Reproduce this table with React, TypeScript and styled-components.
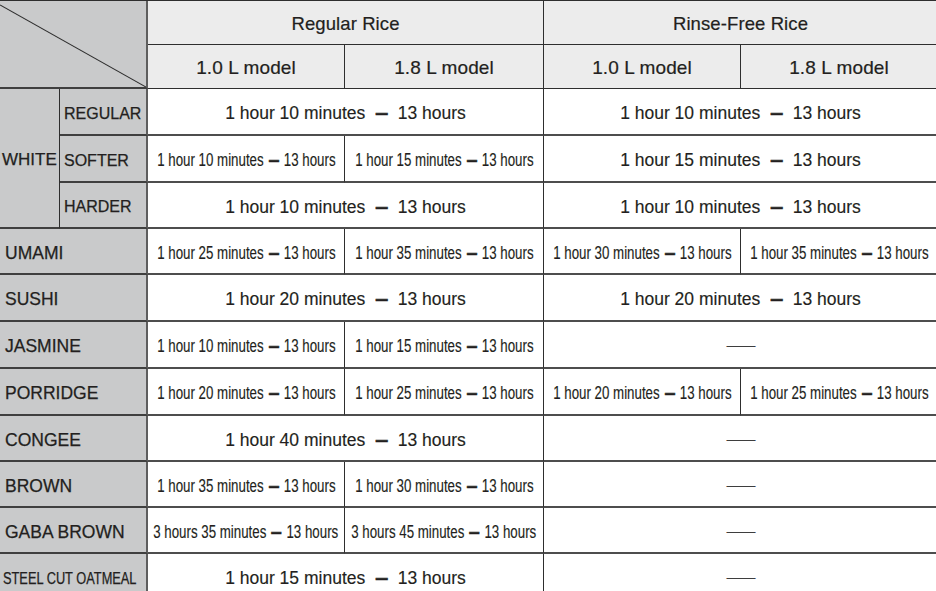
import React from "react";
import styled, { createGlobalStyle, css } from "styled-components";

const Global = createGlobalStyle`
  html, body { margin: 0; padding: 0; background: #ffffff; overflow: hidden; }
  #root { width: 936px; height: 591px; overflow: hidden; }
`;

const Grid = styled.div`
  display: grid;
  width: 938px;
  grid-template-columns: 60px 88px 197px 199px 197px 197px;
  grid-template-rows: 44px 44px 47px 47px 46px 46px 47px 47px 47px 46px 46px 46px 47px;
  border-top: 1px solid #2e2e2e;
  font-family: "Liberation Sans", Arial, Helvetica, sans-serif;
  color: #231f20;
`;

type Tone = "head" | "label" | "body";

const Cell = styled.div<{ $col: string; $row: string; $tone: Tone; $edge?: boolean }>`
  grid-column: ${(p) => p.$col};
  grid-row: ${(p) => p.$row};
  position: relative;
  box-sizing: border-box;
  display: flex;
  align-items: center;
  justify-content: center;
  white-space: nowrap;
  min-width: 0;
  padding-top: ${(p) => (p.$tone === "head" ? 2 : 4)}px;
  background: ${(p) => (p.$tone === "head" ? "#ececec" : p.$tone === "label" ? "#c9cacb" : "#ffffff")};
  border-right: ${(p) => (p.$edge ? "2px solid #5e5e5e" : "1px solid #2e2e2e")};
  border-bottom: ${(p) =>
    p.$tone === "head" ? "1px solid #2e2e2e" : p.$tone === "label" ? "2px solid #3f3f3f" : "2px solid #4d4d4d"};
`;

const HeadText = styled.span<{ $size: number }>`
  font-size: ${(p) => p.$size}px;
  letter-spacing: 0.1px;
  -webkit-text-stroke: 0.2px #231f20;
`;

const LabelText = styled.span<{ $size: number; $squeeze?: number }>`
  display: inline-block;
  font-size: ${(p) => p.$size}px;
  -webkit-text-stroke: 0.25px #231f20;
  transform-origin: left center;
  ${(p) =>
    p.$squeeze &&
    css`
      transform: scaleX(${p.$squeeze});
    `}
`;

const LabelCell = styled(Cell)<{ $pad: number }>`
  justify-content: flex-start;
  padding-left: ${(p) => p.$pad}px;
`;

const BodyText = styled.span<{ $narrow?: boolean }>`
  display: inline-block;
  font-size: 17.5px;
  -webkit-text-stroke: 0.15px #231f20;
  ${(p) =>
    p.$narrow &&
    css`
      transform: scaleX(0.76);
      transform-origin: center center;
    `}
`;

const Dash = styled.span<{ $gap: number; $wide: number }>`
  display: inline-block;
  margin: 0 ${(p) => p.$gap}px;
  font-weight: 700;
  -webkit-text-stroke: 0.6px #231f20;
  transform: scaleX(${(p) => p.$wide});
`;

const NoneMark = styled.span`
  font-size: 15px;
  color: #3e3e3e;
  letter-spacing: -1px;
  margin-top: -4px;
`;

const Diagonal = styled.svg`
  position: absolute;
  inset: 0;
  width: 100%;
  height: 100%;
`;

const Range = ({ from, narrow }: { from: string; narrow?: boolean }) => (
  <BodyText $narrow={narrow}>
    {from}
    <Dash $gap={narrow ? 4.5 : 7.5} $wide={narrow ? 0.75 : 0.68}>
      —
    </Dash>
    13 hours
  </BodyText>
);

type Val = { kind: "span"; v: string } | { kind: "split"; a: string; b: string } | { kind: "none" };

type Row = { label: string; sub?: string; reg: Val; rinse: Val; squeeze?: number };

const m = (n: string) => `1 hour ${n} minutes`;

const rows: Row[] = [
  { label: "WHITE", sub: "REGULAR", reg: { kind: "span", v: m("10") }, rinse: { kind: "span", v: m("10") } },
  { label: "WHITE", sub: "SOFTER", reg: { kind: "split", a: m("10"), b: m("15") }, rinse: { kind: "span", v: m("15") } },
  { label: "WHITE", sub: "HARDER", reg: { kind: "span", v: m("10") }, rinse: { kind: "span", v: m("10") } },
  { label: "UMAMI", reg: { kind: "split", a: m("25"), b: m("35") }, rinse: { kind: "split", a: m("30"), b: m("35") } },
  { label: "SUSHI", reg: { kind: "span", v: m("20") }, rinse: { kind: "span", v: m("20") } },
  { label: "JASMINE", reg: { kind: "split", a: m("10"), b: m("15") }, rinse: { kind: "none" } },
  { label: "PORRIDGE", reg: { kind: "split", a: m("20"), b: m("25") }, rinse: { kind: "split", a: m("20"), b: m("25") } },
  { label: "CONGEE", reg: { kind: "span", v: m("40") }, rinse: { kind: "none" } },
  { label: "BROWN", reg: { kind: "split", a: m("35"), b: m("30") }, rinse: { kind: "none" } },
  {
    label: "GABA BROWN",
    reg: { kind: "split", a: "3 hours 35 minutes", b: "3 hours 45 minutes" },
    rinse: { kind: "none" },
  },
  { label: "STEEL CUT OATMEAL", squeeze: 0.8, reg: { kind: "span", v: m("15") }, rinse: { kind: "none" } },
];

const renderVal = (val: Val, startCol: number, row: number, key: string) => {
  const r = `${row}`;
  if (val.kind === "span") {
    return (
      <Cell key={key} $tone="body" $col={`${startCol} / ${startCol + 2}`} $row={r}>
        <Range from={val.v} />
      </Cell>
    );
  }
  if (val.kind === "split") {
    return [
      <Cell key={key + "a"} $tone="body" $col={`${startCol}`} $row={r}>
        <Range from={val.a} narrow />
      </Cell>,
      <Cell key={key + "b"} $tone="body" $col={`${startCol + 1}`} $row={r}>
        <Range from={val.b} narrow />
      </Cell>,
    ];
  }
  return (
    <Cell key={key} $tone="body" $col={`${startCol} / ${startCol + 2}`} $row={r}>
      <NoneMark>——</NoneMark>
    </Cell>
  );
};

export default function App() {
  return (
    <>
      <Global />
      <Grid>
        <Cell $tone="label" $col="1 / 3" $row="1 / 3" $edge>
          <Diagonal viewBox="0 0 146 88" preserveAspectRatio="none">
            <line x1="0" y1="4" x2="146" y2="88" stroke="#2e2e2e" strokeWidth="1.1" />
          </Diagonal>
        </Cell>
        <Cell $tone="head" $col="3 / 5" $row="1">
          <HeadText $size={18.5}>Regular Rice</HeadText>
        </Cell>
        <Cell $tone="head" $col="5 / 7" $row="1">
          <HeadText $size={18.5}>Rinse-Free Rice</HeadText>
        </Cell>
        <Cell $tone="head" $col="3" $row="2">
          <HeadText $size={19}>1.0 L model</HeadText>
        </Cell>
        <Cell $tone="head" $col="4" $row="2">
          <HeadText $size={19}>1.8 L model</HeadText>
        </Cell>
        <Cell $tone="head" $col="5" $row="2">
          <HeadText $size={19}>1.0 L model</HeadText>
        </Cell>
        <Cell $tone="head" $col="6" $row="2">
          <HeadText $size={19}>1.8 L model</HeadText>
        </Cell>

        <LabelCell $tone="label" $col="1" $row="3 / 6" $pad={2}>
          <LabelText $size={17}>WHITE</LabelText>
        </LabelCell>

        {rows.map((row, i) => {
          const gridRow = i + 3;
          const cells: React.ReactNode[] = [];
          if (row.sub) {
            cells.push(
              <LabelCell key={`s${i}`} $tone="label" $col="2" $row={`${gridRow}`} $pad={4} $edge>
                <LabelText $size={16}>{row.sub}</LabelText>
              </LabelCell>
            );
          } else {
            cells.push(
              <LabelCell key={`l${i}`} $tone="label" $col="1 / 3" $row={`${gridRow}`} $pad={row.squeeze ? 3 : 5} $edge>
                <LabelText $size={row.squeeze ? 16 : 17.5} $squeeze={row.squeeze}>
                  {row.label}
                </LabelText>
              </LabelCell>
            );
          }
          cells.push(renderVal(row.reg, 3, gridRow, `r${i}`));
          cells.push(renderVal(row.rinse, 5, gridRow, `f${i}`));
          return <React.Fragment key={i}>{cells}</React.Fragment>;
        })}
      </Grid>
    </>
  );
}
